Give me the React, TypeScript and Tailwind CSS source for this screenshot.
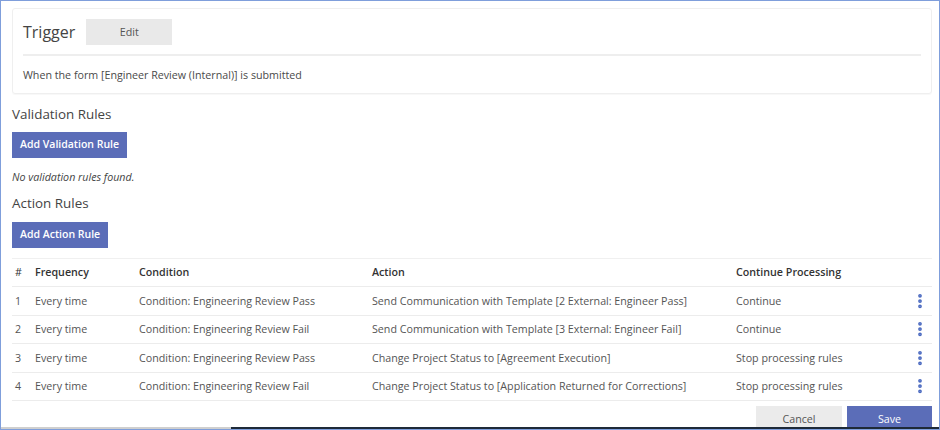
import { EllipsisVertical } from "lucide-react";

const rules = [
  { n: 1, freq: "Every time", cond: "Condition: Engineering Review Pass", action: "Send Communication with Template [2 External: Engineer Pass]", cont: "Continue" },
  { n: 2, freq: "Every time", cond: "Condition: Engineering Review Fail", action: "Send Communication with Template [3 External: Engineer Fail]", cont: "Continue" },
  { n: 3, freq: "Every time", cond: "Condition: Engineering Review Pass", action: "Change Project Status to [Agreement Execution]", cont: "Stop processing rules" },
  { n: 4, freq: "Every time", cond: "Condition: Engineering Review Fail", action: "Change Project Status to [Application Returned for Corrections]", cont: "Stop processing rules" },
];

const cols = "grid grid-cols-[20px_104px_233px_364px_1fr_24px] items-center pl-[3px]";

export default function App() {
  return (
    <div className="w-[940px] h-[430px] relative overflow-hidden bg-white border border-[#7f9edb] font-['Open_Sans',sans-serif] text-[#555]">
      <div className="pl-[11px] pr-[6px] pt-[7px]">
        {/* trigger card */}
        <div className="w-[920px] border border-[#efefef] rounded-[3px] px-[10px] pt-[10px] pb-[9px] shadow-[0_1px_1px_rgba(0,0,0,0.03)]">
          <div className="flex items-center gap-[11px] h-[26px]">
            <span className="text-[16px] text-[#444] leading-none">Trigger</span>
            <button className="w-[86px] h-[26px] bg-[#e9e9e9] text-[10.7px] text-[#555]">Edit</button>
          </div>
          <div className="h-[2px] bg-[#eeeeee] mt-[9px]" />
          <p className="text-[10.7px] leading-[18px] mt-[10px] text-[#4a4a4a]">
            When the form [Engineer Review (Internal)] is submitted
          </p>
        </div>

        <h2 className="text-[13.4px] leading-[20px] mt-[10px] text-[#444]">Validation Rules</h2>
        <button className="mt-[8px] h-[26px] px-[8px] bg-[#5b6db8] text-white text-[10.5px] font-semibold">
          Add Validation Rule
        </button>
        <p className="italic text-[10.7px] leading-[16px] mt-[11px] text-[#444]">No validation rules found.</p>

        <h2 className="text-[13.4px] leading-[20px] mt-[8px] text-[#444]">Action Rules</h2>
        <button className="mt-[9px] h-[26px] px-[8px] bg-[#5b6db8] text-white text-[10.5px] font-semibold">
          Add Action Rule
        </button>

        {/* action rules table */}
        <div className="w-[920px] mt-[10px] border-t border-[#f0f0f0] text-[10.7px]">
          <div className={`${cols} h-[28px] border-b border-[#ececec] font-semibold text-[#333]`}>
            <span className="font-normal">#</span>
            <span>Frequency</span>
            <span>Condition</span>
            <span>Action</span>
            <span>Continue Processing</span>
            <span />
          </div>
          {rules.map((r) => (
            <div key={r.n} className={`${cols} h-[28.5px] border-b border-[#ececec]`}>
              <span>{r.n}</span>
              <span>{r.freq}</span>
              <span>{r.cond}</span>
              <span>{r.action}</span>
              <span>{r.cont}</span>
              <span className="flex justify-center text-[#4a69c0]">
                <EllipsisVertical size={18} strokeWidth={3} />
              </span>
            </div>
          ))}
          <div className="flex justify-end gap-[5px] mt-[5px]">
            <button className="w-[86px] h-[26px] bg-[#ebebeb] text-[10.7px] text-[#555]">Cancel</button>
            <button className="w-[85px] h-[26px] bg-[#5b6db8] text-[10.7px] text-white">Save</button>
          </div>
        </div>
      </div>

      {/* horizontal scrollbar strip at bottom */}
      <div className="absolute left-0 right-0 bottom-0 h-[2px] flex">
        <div className="w-[230px] bg-[#cfcfcf]" />
        <div className="flex-1 bg-[#1e2a38]" />
      </div>
    </div>
  );
}
